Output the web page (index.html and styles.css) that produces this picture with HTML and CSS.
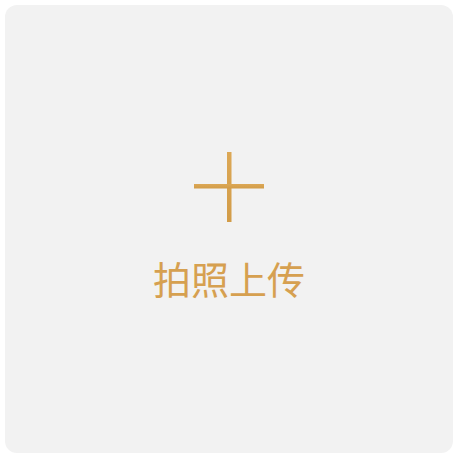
FILE: index.html
```html
<!DOCTYPE html>
<html lang="zh-CN">
<head>
<meta charset="utf-8">
<title>拍照上传</title>
<link rel="stylesheet" href="styles.css">
</head>
<body>
<div class="page">
  <div class="upload-card">
    <svg class="plus-icon" width="70" height="70" viewBox="0 0 70 70" aria-hidden="true">
      <defs>
        <linearGradient id="gold" x1="0" y1="0" x2="0" y2="1">
          <stop offset="0" stop-color="#dca856"/>
          <stop offset="1" stop-color="#d29c48"/>
        </linearGradient>
      </defs>
      <rect x="33" y="0" width="4.5" height="70" fill="url(#gold)"/>
      <rect x="0" y="32" width="70" height="4.5" fill="url(#gold)"/>
    </svg>
    <div class="upload-label">拍照上传</div>
  </div>
</div>
</body>
</html>
```

FILE: styles.css
```css
html, body {
  margin: 0;
  padding: 0;
  background: #ffffff;
}
.page {
  width: 462px;
  height: 462px;
  padding: 5px;
  box-sizing: border-box;
}
.upload-card {
  width: 448px;
  height: 448px;
  background: #f2f2f2;
  border-radius: 12px;
  display: flex;
  flex-direction: column;
  align-items: center;
  justify-content: center;
  padding-bottom: 9px;
  box-sizing: border-box;
}
.plus-icon {
  display: block;
}
.upload-label {
  margin-top: 37px;
  font-family: "Noto Sans CJK SC", "Noto Sans", sans-serif;
  font-size: 38px;
  line-height: 1;
  color: #d6a050;
  letter-spacing: 0;
}
```
